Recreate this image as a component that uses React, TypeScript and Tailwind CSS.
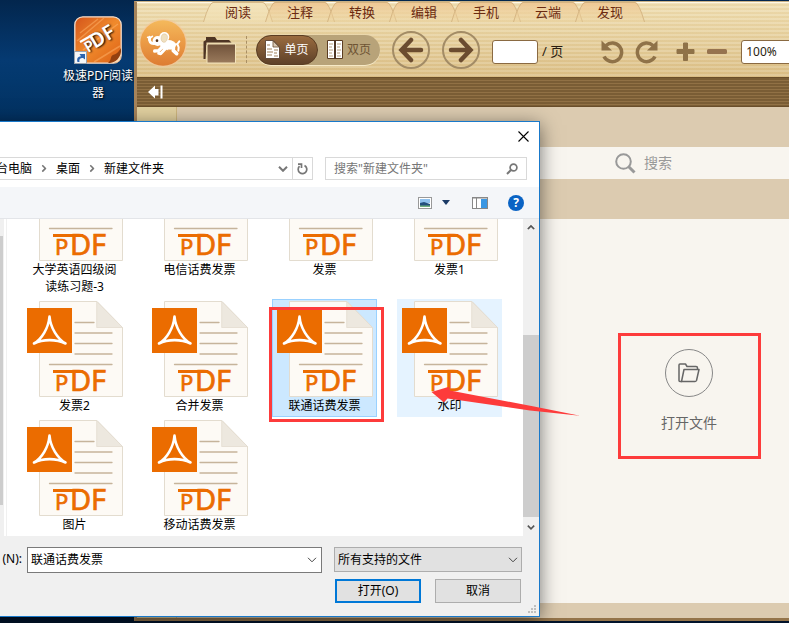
import type { ReactNode } from 'react'

const tabs = ['阅读', '注释', '转换', '编辑', '手机', '云端', '发现']

const files = [
  { name: '大学英语四级阅读练习题-3' },
  { name: '电信话费发票' },
  { name: '发票' },
  { name: '发票1' },
  { name: '发票2' },
  { name: '合并发票' },
  { name: '联通话费发票', state: 'selected' },
  { name: '水印', state: 'hover' },
  { name: '图片' },
  { name: '移动话费发票' },
]

const Chevron = ({ className, width = 1.5 }: { className?: string; width?: number }) => (
  <svg viewBox="0 0 10 6" className={className} fill="none" stroke="currentColor" strokeWidth={width}>
    <path d="M1 .8 5 4.8 9 .8" />
  </svg>
)

const PdfIcon = () => (
  <svg width="96" height="96" viewBox="0 0 96 96" className="shrink-0">
    <path d="M12.5.5H70L95.5 26.500V95.500H12.500Z" fill="#fdfaf5" stroke="#e3dccf" />
    <path d="M69.700.500V26.500H95.500Z" fill="#ede8df" stroke="#e3dccf" strokeWidth=".8" />
    <g stroke="#c6b49b" strokeWidth="1.300" strokeLinecap="round">
      <path d="M48 21.500H67M48 32H85M48 42.500H85M48 53H85M22.500 63.500H85" />
    </g>
    <rect y="7" width="45" height="45" fill="#eb6c00" />
    <path
      d="M22.500 15.500C21.500 27 15 38 7 42.500 16 38 29 38 38.500 42.500 30.500 38 23.500 27 22.500 15.500Z"
      fill="none"
      stroke="#fff"
      strokeWidth="2.600"
      strokeLinejoin="round"
    />
    <rect x="26" y="69" width="30" height="3" fill="#eb6c00" />
    <text y="90" fontSize="29" fill="#eb6c00" stroke="#eb6c00" strokeWidth=".7" fontFamily="Noto Sans, sans-serif">
      <tspan x="28" fontSize="22">
        P
      </tspan>
      <tspan x="43">D</tspan>
      <tspan x="64">F</tspan>
    </text>
  </svg>
)

const ShortcutIcon = () => (
  <svg width="48" height="48" viewBox="0 0 48 48">
    <defs>
      <linearGradient id="shortcut" x1="0" y1="0" x2="1" y2="1">
        <stop offset="0" stopColor="#d4541b" />
        <stop offset=".5" stopColor="#f08a2c" />
        <stop offset="1" stopColor="#dc5f14" />
      </linearGradient>
    </defs>
    <rect x=".8" y=".8" width="46.400" height="46.400" rx="8" fill="url(#shortcut)" stroke="#f2dccb" strokeWidth="1.300" />
    <path d="M3 25 30 2M6 17 24 3M9 34 44 8M20 46 46 30" stroke="#ffb36a" strokeOpacity=".5" strokeWidth="1.500" />
    <path d="M34 47C38 44 36 40 39 39 42 38 44 37 47 32V40Q47 47 40 47Z" fill="#94400f" />
    <path d="M36 47C42 46 46 42 47 36V40Q47 47 40 47Z" fill="#fbd9b5" />
    <path d="M6 26 22 17" stroke="#fff" strokeWidth="2.200" />
    <g fill="#fff" fontWeight="600" fontFamily="Noto Sans, sans-serif" transform="rotate(-31 14 37)">
      <text x="14" y="37" fontSize="15">
        P
      </text>
      <text x="22" y="37" fontSize="20">
        DF
      </text>
    </g>
    <rect x=".5" y="35.500" width="12" height="12" fill="#f4f6f8" stroke="#9aa3ad" />
    <path d="M3.500 46C2.500 42 4 40.500 7 40.200L5.500 38H11V43.500L9 42C6 42 5 43 5.500 46Z" fill="#2b64b0" />
  </svg>
)

const Elephant = () => (
  <svg width="50" height="50" viewBox="0 6 150 150" className="shrink-0">
    <defs>
      <linearGradient id="logo" x1="0" y1="0" x2="0" y2="1">
        <stop offset="0" stopColor="#f4b95c" />
        <stop offset=".5" stopColor="#eb9a45" />
        <stop offset="1" stopColor="#dd7c33" />
      </linearGradient>
    </defs>
    <circle cx="75" cy="81" r="72" fill="#f6c79a" opacity=".6" />
    <circle cx="75" cy="81" r="68" fill="url(#logo)" />
    <g fill="none" stroke="#fff" strokeLinecap="round" strokeLinejoin="round">
      <path d="M35 64C32 76 38 84 50 82" strokeWidth="9" />
      <path d="M29 64 35 67 43 61" strokeWidth="5" />
      <path d="M74 92 62 104 50 105" strokeWidth="10" />
      <path d="M82 98 68 113 62 112" strokeWidth="9" />
      <path d="M106 92 106 104 116 113" strokeWidth="11" />
      <path d="M110 86 118 84 124 76M118 84 122 94 121 104" strokeWidth="6" />
    </g>
    <g fill="#fff">
      <circle cx="59" cy="75" r="15" />
      <circle cx="79" cy="63" r="15" />
      <ellipse cx="90" cy="87" rx="24" ry="15" />
    </g>
    <path d="M70 62C72 51 86 51 88 61 89 71 85 79 77 79 70 77 68 70 70 62Z" fill="#efe0c0" stroke="#d9b98a" strokeWidth="1.500" />
    <circle cx="57" cy="74" r="4" fill="#5b3417" />
    <path d="M84 106 94 101" stroke="#e9a25c" strokeWidth="3" />
  </svg>
)

const RoundButton = ({ label, children }: { label: string; children: ReactNode }) => (
  <button aria-label={label} className="flex size-[38px] shrink-0 items-center justify-center rounded-full border-2 border-[#a38c66] text-[#6b4c30]">
    {children}
  </button>
)

const DesktopShortcut = () => (
  <a href="#" className="flex w-[74px] flex-col items-center text-center text-xs/[17px] text-white [text-shadow:1px_1px_2px_#000]">
    <ShortcutIcon />
    <span className="mt-[3px]">极速PDF阅读器</span>
  </a>
)

const Tabs = () => (
  <nav className="flex h-5">
    {tabs.map((tab, i) => (
      <a key={tab} href="#" className="relative -mr-2 flex w-[70px] shrink-0 items-center justify-center pt-0.5 text-[13px] text-[#6b2a10]">
        <svg viewBox="0 0 70 20" className="absolute inset-0 h-5 w-[70px]">
          <defs>
            <linearGradient id={`tab${i}`} x1="0" y1="0" x2="0" y2="1">
              <stop offset="0" stopColor={i === 0 ? '#f3e3b9' : '#efc793'} />
              <stop offset="1" stopColor={i === 0 ? '#f1e0b4' : '#eed5a0'} stopOpacity={i === 0 ? 0.6 : 0.3} />
            </linearGradient>
          </defs>
          <path d="M0 20Q6 0 10 0H60Q64 0 70 20Z" fill={`url(#tab${i})`} />
          <path d="M.5 20Q6 1 10 .5H60Q64 1 69.500 20" fill="none" stroke="#cfae7c" strokeWidth=".8" />
        </svg>
        <span className="relative">{tab}</span>
      </a>
    ))}
  </nav>
)

const Tools = () => (
  <div className="flex h-[55px] items-center">
    <button aria-label="打开" className="shrink-0">
      <svg width="33" height="28" viewBox="0 0 33 28">
        <defs>
          <linearGradient id="folder" x1="0" y1="0" x2="0" y2="1">
            <stop offset="0" stopColor="#6f5139" />
            <stop offset="1" stopColor="#9a7a5c" />
          </linearGradient>
        </defs>
        <path d="M.500 23V5.500L3 4V1H12L14 4H26L28.500 6.500H3.500L2.500 23Z" fill="#4e3524" />
        <path d="M4 27V9L5.500 8H32.500V27Z" fill="url(#folder)" stroke="#f3e2b8" />
      </svg>
    </button>
    <div className="ml-2.5 h-[27px] border-l border-dashed border-[#a98f64]" />
    <div className="ml-[9px] flex h-[30px] w-[124px] shrink-0 rounded-full bg-[#b8a379] text-xs shadow-[0_1px_0_#f6e9c6]">
      <button className="flex w-[62px] items-center justify-center gap-1 rounded-full border border-[#5b3d22] bg-linear-to-b from-[#9a6b3f] to-[#5f4229] text-white">
        <svg width="15" height="19" viewBox="0 0 15 19">
          <path d="M.5.5H8.500L14.500 7V18.500H.500Z" fill="#fff" stroke="#4e3524" strokeWidth=".8" />
          <path d="M8 1V7H14Z" fill="#d8c8b4" stroke="#6b4c30" strokeWidth=".8" />
          <path d="M2 5H5M2 9H7M2 12H8M2 15H7M9 10H13M9 13H12M9 16H13" stroke="#a1815d" />
        </svg>
        单页
      </button>
      <button className="flex w-[62px] items-center justify-center gap-1 text-[#6e5434]">
        <svg width="16" height="19" viewBox="0 0 16 19">
          <path d="M.5.5H15.500V18.500H.500Z" fill="#fff" stroke="#5b3d22" />
          <path d="M8 0V19" stroke="#4e3524" strokeWidth="2" />
          <path d="M2 4H6M2 7H5M2 10H6M2 13H5M2 16H6M10 4H14M10 7H13M10 10H14M10 13H13M10 16H14" stroke="#b59b7a" />
        </svg>
        双页
      </button>
    </div>
    <div className="ml-3 flex gap-3">
      <RoundButton label="上一页">
        <svg width="26" height="26" viewBox="0 0 26 26" fill="none" stroke="currentColor" strokeWidth="4.500" strokeLinecap="round">
          <path d="M13 3 3.500 13 13 23M4 13H23" />
        </svg>
      </RoundButton>
      <RoundButton label="下一页">
        <svg width="26" height="26" viewBox="0 0 26 26" fill="none" stroke="currentColor" strokeWidth="4.500" strokeLinecap="round">
          <path d="M13 3 22.500 13 13 23M22 13H3" />
        </svg>
      </RoundButton>
    </div>
    <label className="ml-3 flex shrink-0 items-center gap-1 pt-1 text-[13px] text-[#2b1d10]">
      <input type="text" className="h-6 w-[46px] rounded-[3px] border border-[#8a6a42] bg-white px-1" />/ 页
    </label>
    <div className="ml-[38px] flex shrink-0 items-center pt-1 text-[#8f7248]">
      <button aria-label="向左旋转">
        <svg width="23" height="24" viewBox="0 0 23 24">
          <path d="M5 5.500A9.300 9.300 0 1 1 3 16.500" fill="none" stroke="currentColor" strokeWidth="3.500" />
          <path d="M.500.500V10.500H11Z" fill="currentColor" />
        </svg>
      </button>
      <button aria-label="向右旋转" className="ml-[11px]">
        <svg width="23" height="24" viewBox="0 0 23 24">
          <path d="M18 5.500A9.300 9.300 0 1 0 20 16.500" fill="none" stroke="currentColor" strokeWidth="3.500" />
          <path d="M22.500.500V10.500H12Z" fill="currentColor" />
        </svg>
      </button>
      <button aria-label="放大" className="ml-[18px]">
        <svg width="19" height="19" viewBox="0 0 19 19">
          <path d="M7.500 1H11.500V7.500H18V11.500H11.500V18.500H7.500V11.500H1V7.500H7.500Z" fill="currentColor" stroke="currentColor" strokeLinejoin="round" />
        </svg>
      </button>
      <button aria-label="缩小" className="ml-3">
        <svg width="20" height="5" viewBox="0 0 20 5">
          <rect width="20" height="5" rx="1.500" fill="#96734f" />
        </svg>
      </button>
    </div>
    <input
      type="text"
      aria-label="缩放比例"
      defaultValue="100%"
      className="mt-1 ml-3.5 h-6 w-[68px] shrink-0 rounded-[3px] border border-[#8a6a42] bg-white pl-1 text-xs text-[#2b1d10]"
    />
  </div>
)

const Reader = () => (
  <div className="mt-px mb-0.5 flex min-w-0 flex-1 flex-col overflow-hidden border-t border-b-3 border-l-3 border-t-[#c9b184] border-b-[#94744a] border-l-[#a5835a]">
    <header className="flex h-[75px] shrink-0 bg-[repeating-linear-gradient(to_bottom,#fff2_0_2px,#b98f4a11_2px_4px),linear-gradient(to_bottom,#f0dfb2,#dcc088)] pl-px shadow-[inset_0_1px_0_#fff8e6]">
      <div className="pt-4">
        <Elephant />
      </div>
      <div className="ml-[15px] shrink-0">
        <Tabs />
        <Tools />
      </div>
    </header>
    <div className="flex h-[30px] shrink-0 items-center border-t border-b border-[#6a4e2a] bg-[repeating-linear-gradient(to_bottom,#7a5d35_0_2px,#917145_2px_3px)] pl-2.5">
      <button aria-label="收起侧栏">
        <svg width="18" height="14" viewBox="0 0 18 14" fill="#fff">
          <path d="M1 7 8 .500V4H11.500V10.500H8V13.500Z" />
          <rect x="13.500" y=".500" width="2" height="13" />
        </svg>
      </button>
    </div>
    <div className="flex flex-1">
      <aside className="w-10 shrink-0 border-r border-[#cdb57d] bg-[#e1d09f]" />
      <main className="flex flex-1 flex-col bg-[#dccbb0] pt-10 pb-[15px]">
        <label className="flex h-8 items-center gap-2 bg-[#f8f5ef] pl-[438px] text-sm text-[#999]">
          <svg width="21" height="21" viewBox="0 0 21 21" fill="none" stroke="#999" className="shrink-0">
            <circle cx="8.500" cy="8.500" r="7.300" strokeWidth="2" />
            <path d="m13.500 13.500 6 6" strokeWidth="3" />
          </svg>
          <input type="text" placeholder="搜索" className="w-full min-w-0 placeholder:text-[#999]" />
        </label>
        <div className="mt-10 flex flex-1 items-start justify-center bg-[#f8f5ef] pt-[114px] pl-[412px]">
          <button className="flex h-[126px] w-[143px] flex-col items-center border-3 border-[#fd3b3b] pt-[13px] text-sm text-[#666]">
            <span className="flex size-12 items-center justify-center rounded-full border border-[#888]">
              <svg width="22" height="20" viewBox="0 0 22 20" fill="none" stroke="#666" strokeWidth="1.500" strokeLinejoin="round">
                <path d="M4 18.500H2Q1 18.500 1 17.500V2Q1 1 2 1H7.500L9 3.500H18Q19.500 3.500 19.500 5V6.500" />
                <path d="M6 6.500H21L18.500 17.500Q18 18.500 17 18.500H3.500Z" />
              </svg>
            </span>
            <span className="mt-4">打开文件</span>
          </button>
        </div>
      </main>
    </div>
  </div>
)

const FileDialog = () => (
  <div
    role="dialog"
    aria-label="打开"
    className="absolute top-[121px] -left-10 flex w-[580px] flex-col border border-[#1979ca] bg-white text-xs text-black shadow-[0_4px_18px_#0008]"
  >
    <div className="flex h-[35px] justify-end pt-2 pr-2.5">
      <button aria-label="关闭" className="h-3">
        <svg width="11" height="11" viewBox="0 0 11 11" stroke="#000" strokeWidth="1.100">
          <path d="m.5.5 10 10M10.500.500l-10 10" />
        </svg>
      </button>
    </div>

    <div className="flex gap-3 pr-3 pb-[7px] pl-3">
      <div className="flex h-[23px] flex-1 items-center border border-[#d9d9d9] pl-2.5">
        <a href="#">这台电脑</a>
        <Chevron width={2} className="mx-2 w-2 -rotate-90 text-[#777]" />
        <a href="#">桌面</a>
        <Chevron width={2} className="mx-2 w-2 -rotate-90 text-[#777]" />
        <a href="#">新建文件夹</a>
        <button aria-label="历史" className="mr-1 ml-auto">
          <Chevron width={2} className="w-2.5 text-[#777]" />
        </button>
        <button aria-label="刷新" className="flex h-full w-5 items-center justify-center border-l border-[#d9d9d9]">
          <svg width="11" height="12" viewBox="0 0 11 12" fill="none" stroke="#777" strokeWidth="1.700">
            <path d="M7.500 2.500A4.300 4.300 0 1 1 2.500 3.200" />
            <path d="M1 1.200H4.500V5" />
          </svg>
        </button>
      </div>
      <div className="flex h-[23px] w-[202px] items-center border border-[#d9d9d9] px-2">
        <input type="text" aria-label="搜索" placeholder={'搜索"新建文件夹"'} className="min-w-0 flex-1 placeholder:text-[#767676]" />
        <svg width="12" height="12" viewBox="0 0 12 12" fill="none" stroke="#777">
          <circle cx="7.500" cy="4.500" r="3.400" strokeWidth="1.700" />
          <path d="M5 7 1 11" strokeWidth="2" />
        </svg>
      </div>
    </div>

    <div className="flex h-8 items-center justify-end border-b border-[#e3e5e9] bg-[#f4f6f9] pr-[15px]">
      <button aria-label="视图">
        <svg width="14" height="12" viewBox="0 0 14 12">
          <rect x=".5" y=".5" width="13" height="11" fill="#fff" stroke="#999" />
          <path d="M2 2H12V6H2Z" fill="#8fc1ee" />
          <path d="M2 6 6 5 12 7V9H2Z" fill="#234f7e" />
          <path d="M2 8.500H12V10H2Z" fill="#6fae7d" />
        </svg>
      </button>
      <button aria-label="更多视图" className="ml-2.5">
        <svg width="8" height="5" viewBox="0 0 8 5" fill="#1b3a66">
          <path d="M0 0H8L4 5Z" />
        </svg>
      </button>
      <button aria-label="预览窗格" className="ml-[22px]">
        <svg width="16" height="12" viewBox="0 0 16 12">
          <rect x=".5" y=".5" width="15" height="11" fill="#fff" stroke="#888" />
          <path d="M0 1H16M4.500 1V11" stroke="#888" strokeWidth="1" />
          <rect x="9" y="2" width="6" height="9" fill="#3b97e3" />
        </svg>
      </button>
      <button aria-label="帮助" className="ml-5 flex size-4 items-center justify-center rounded-full bg-[#0a63c4] text-xs font-bold text-white">
        ?
      </button>
    </div>

    <div className="flex h-[317px]">
      <div className="w-[43px] shrink-0 bg-[#f0f0f0] pt-[17px] pb-[31px]">
        <div className="h-full w-[42px] bg-[#cdcdcd]" />
      </div>
      <div className="ml-0.5 flex-1 overflow-hidden border-l border-[#f0f0f0] pl-[15px]">
        <ul className="-mt-14 grid grid-cols-[repeat(4,105px)] items-start gap-x-5 gap-y-px">
          {files.map((file) => (
            <li key={file.name}>
              <button
                className={`flex w-full flex-col items-center border pt-px pb-0.5 ${
                  file.state === 'selected'
                    ? 'border-[#99d1ff] bg-[#cce8ff]'
                    : file.state === 'hover'
                      ? 'border-[#e5f3ff] bg-[#e5f3ff]'
                      : 'border-transparent'
                }`}
              >
                <PdfIcon />
                <span className="max-w-[90px] text-xs/[17px]">{file.name}</span>
              </button>
            </li>
          ))}
        </ul>
      </div>
      <div className="flex w-4 shrink-0 flex-col items-center bg-[#f0f0f0] py-1.5">
        <Chevron width={2} className="w-2 rotate-180 text-[#555]" />
        <div className="mt-[105px] h-[183px] w-full bg-[#cdcdcd]" />
        <Chevron width={2} className="mt-2 w-2 text-[#555]" />
      </div>
    </div>

    <div className="flex flex-col bg-[#f0f0f0] pt-[11px] pr-[17px]">
      <div className="flex">
        <label htmlFor="filename" className="flex w-[66px] justify-end gap-1 pt-1 pr-[5px] whitespace-nowrap">
          <span>文件名</span>
          <span>(N):</span>
        </label>
        <div className="flex h-[26px] flex-1 items-center border border-[#7a7a7a] bg-white pr-1">
          <input id="filename" type="text" defaultValue="联通话费发票" className="min-w-0 flex-1 pl-[3px]" />
          <button aria-label="最近的文件">
            <Chevron width={1} className="w-2.5 text-[#444]" />
          </button>
        </div>
        <div className="ml-3 grid h-[25px] w-[188px] items-center">
          <select aria-label="文件类型" className="col-start-1 row-start-1 h-full appearance-none border border-[#adadad] bg-[#e1e1e1] pl-[3px]">
            <option>所有支持的文件</option>
          </select>
          <Chevron width={1} className="pointer-events-none col-start-1 row-start-1 mr-1 w-2.5 justify-self-end text-[#444]" />
        </div>
      </div>
      <div className="mt-1.5 flex justify-end gap-3.5 pr-px">
        <button className="h-6 w-[86px] border-2 border-[#0078d7] bg-[#e1e1e1]">打开(O)</button>
        <button className="h-6 w-[86px] border border-[#adadad] bg-[#e1e1e1]">取消</button>
      </div>
      <svg width="9" height="9" viewBox="0 0 9 9" fill="#bfbfbf" className="mt-0.5 -mr-[15px] mb-0.5 self-end">
        <path d="M6 0h2v2h-2zM3 3h2v2h-2zM6 3h2v2h-2zM0 6h2v2h-2zM3 6h2v2h-2zM6 6h2v2h-2z" />
      </svg>
    </div>
  </div>
)

const App = () => {
  return (
    <div className="relative flex min-h-screen overflow-hidden bg-[linear-gradient(to_bottom,#03264d_0,#053a72_60px,#03386d_80px,#02305f_122px,#01132b_100%)] font-['Noto_Sans','Noto_Sans_CJK_SC',sans-serif]">
      <div className="w-[134px] shrink-0 bg-[linear-gradient(8deg,transparent_45%,#0a58a066_50%,transparent_56%)] pt-4 pl-[61px]">
        <DesktopShortcut />
      </div>
      <Reader />
      <FileDialog />

      {/* highlight around the picked file and the arrow from the open button */}
      <div className="pointer-events-none absolute top-[307px] left-[269px] h-[115px] w-[115px] border-3 border-[#fd3b3b]" />
      <svg width="150" height="32" viewBox="431 385 150 32" fill="#fd3b3b" className="pointer-events-none absolute top-[385px] left-[431px]">
        <path d="M431.500 392 449 386.700 450 390.500 534 406.500 580 415.700 530 410.500 447.500 398.500 444 402.500Z" />
      </svg>
    </div>
  )
}

export default App
